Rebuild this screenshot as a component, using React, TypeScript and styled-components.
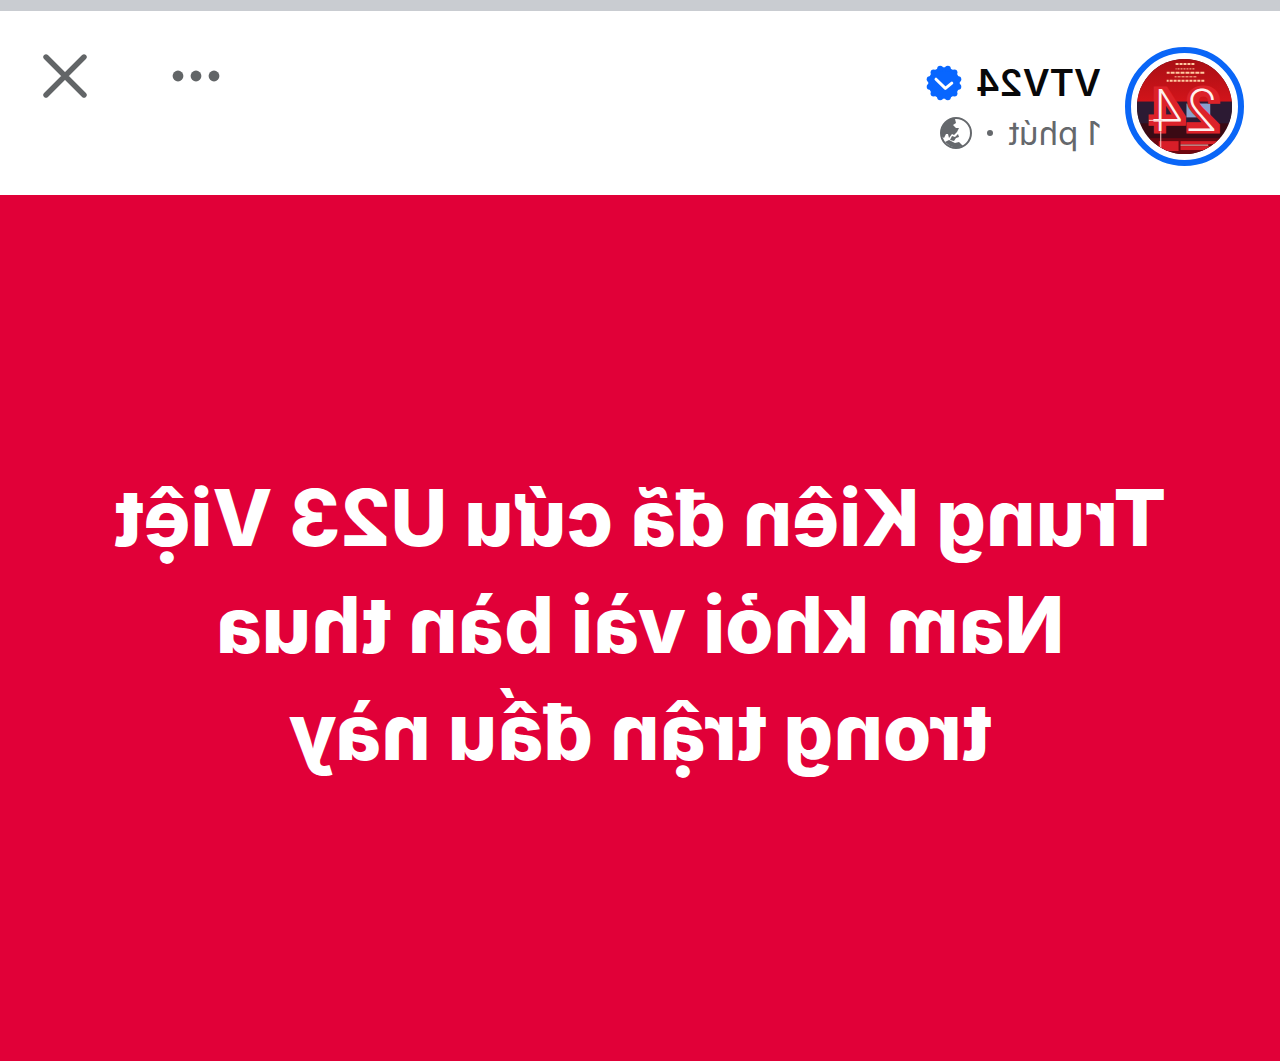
import React from "react";
import styled, { createGlobalStyle } from "styled-components";

const GlobalStyle = createGlobalStyle`
  *, *::before, *::after { box-sizing: border-box; }
  body {
    margin: 0;
    background: #ffffff;
    font-family: Inter, Roboto, "Liberation Sans", sans-serif;
  }
`;

/* The whole post is shown as a mirror image. */
const Page = styled.main`
  display: flex;
  flex-direction: column;
  min-height: 100vh;
  transform: scaleX(-1);
`;

const TopStrip = styled.div`
  height: 11px;
  background: #c9ccd1;
`;

const Header = styled.header`
  display: flex;
  align-items: flex-start;
  gap: 24px;
  padding: 36px 36px 29px;
  background: #ffffff;
`;

const AvatarLink = styled.a`
  display: flex;
  flex: none;
  width: 119px;
  height: 119px;
  padding: 6px;
  border: 6px solid #0a66f7;
  border-radius: 50%;

  svg { width: 100%; height: 100%; }
`;

const Author = styled.div`
  flex: 1;
  min-width: 0;
  padding-top: 11px;
`;

const Row = styled.div<{ $gap: number }>`
  display: flex;
  align-items: center;
  gap: ${(p) => p.$gap}px;
  line-height: 50px;
`;

const Name = styled.a`
  color: #080809;
  font-size: 37px;
  font-weight: 600;
  text-decoration: none;
`;

const Time = styled.time`
  color: #65686c;
  font-size: 33px;
`;

const Separator = styled.span`
  width: 6px;
  height: 6px;
  border-radius: 50%;
  background: #65686c;
`;

const Actions = styled.div`
  display: flex;
  gap: 72px;
`;

const IconButton = styled.button`
  display: grid;
  place-items: center;
  width: 59px;
  height: 58px;
  padding: 0;
  border: 0;
  background: none;
  color: #626567;
  cursor: pointer;
`;

const Story = styled.section`
  display: grid;
  flex: 1;
  place-items: center;
  padding: 24px 24px 32px;
  background: #e10038;
`;

const Headline = styled.h1`
  margin: 0;
  color: #ffffff;
  font-size: 78px;
  font-weight: 800;
  line-height: 107px;
  text-align: center;
`;

function Avatar() {
  return (
    <svg viewBox="0 0 96 96" aria-hidden="true">
      <defs>
        <clipPath id="disc"><circle cx="48" cy="48" r="48" /></clipPath>
        <linearGradient id="sky" x1="0" y1="0" x2="0" y2="1">
          <stop offset="0" stopColor="#a80f14" />
          <stop offset="1" stopColor="#d3141a" />
        </linearGradient>
      </defs>
      <g clipPath="url(#disc)">
        <rect width="96" height="96" fill="#3a0a14" />
        <rect width="96" height="44" fill="url(#sky)" />
        <rect y="43" width="96" height="22" fill="#2c1a33" />
        <rect x="22" y="45" width="24" height="14" fill="#8aa0cc" />
        <rect y="80" width="96" height="16" fill="#6d0710" />
        <g stroke="#ffc9a0" strokeWidth="2">
          <path d="M38 5h19" strokeDasharray="3 1" />
          <path d="M38 10h19" strokeWidth="1" strokeDasharray="2 1" />
          <path d="M28 14h38" strokeDasharray="4 1" />
          <path d="M36 18h22" strokeWidth="1" strokeDasharray="3 1" />
          <path d="M28 22h38" strokeDasharray="3 1" />
        </g>
        <g fill="#d81e28">
          <rect x="14" y="83" width="38" height="3" />
          <rect x="20" y="88" width="32" height="4" />
          <rect x="54" y="83" width="20" height="10" />
        </g>
        <g fontFamily="Inter, sans-serif" fontSize="58" textAnchor="middle">
          <text x="48" y="73" fontWeight="600" fill="#dc2229" stroke="#dc2229" strokeWidth="5">24</text>
          <text x="48" y="73" fontWeight="200" fill="#fff1ee">24</text>
        </g>
        <path d="M72 73v21M24 87h28M70 62h14" stroke="#ffd2cb" strokeWidth="1" />
      </g>
    </svg>
  );
}

function VerifiedBadge() {
  const points = Array.from({ length: 12 }, (_, i) => ((i + 0.5) * Math.PI) / 6);
  return (
    <svg width="36" height="36" viewBox="-18 -18 36 36" role="img" aria-label="Verified">
      <g fill="#0866ff">
        <circle r="15.8" />
        {points.map((a) => (
          <circle key={a} cx={Math.cos(a) * 14.8} cy={Math.sin(a) * 14.8} r="3" />
        ))}
      </g>
      <path d="M-7.8 0.2L-1.4 5.4L8 -3.8" fill="none" stroke="#fff" strokeWidth="3" strokeLinecap="round" strokeLinejoin="round" />
    </svg>
  );
}

function Globe() {
  return (
    <svg width="32" height="32" viewBox="0 0 32 32" role="img" aria-label="Public">
      <circle cx="16" cy="16" r="15" fill="#fff" stroke="#65686c" strokeWidth="2" />
      <g fill="#65686c">
        <path d="M17 2L22 2L28 7L31 14L31 19L28 21L26 17L24 17L23 21L20 17L18 18L15 15L13 11L16 11L19 8L16 6Z" />
        <path d="M20 19L22 23L18 24L16 21L13 20L14 17L17 20Z" />
        <path d="M23 23L27 25L22 29L16 31L9 29L13 25L17 26Z" />
      </g>
    </svg>
  );
}

export default function App() {
  return (
    <>
      <GlobalStyle />
      <Page lang="vi">
        <TopStrip />
        <Header>
          <AvatarLink href="#vtv24" aria-label="VTV24"><Avatar /></AvatarLink>
          <Author>
            <Row $gap={14}>
              <Name href="#vtv24">VTV24</Name>
              <VerifiedBadge />
            </Row>
            <Row $gap={15}>
              <Time>1 phút</Time>
              <Separator />
              <Globe />
            </Row>
          </Author>
          <Actions>
            <IconButton type="button" aria-label="More">
              <svg width="48" height="12" viewBox="0 0 48 12" fill="currentColor">
                <circle cx="6" cy="6" r="5.4" />
                <circle cx="24" cy="6" r="5.4" />
                <circle cx="42" cy="6" r="5.4" />
              </svg>
            </IconButton>
            <IconButton type="button" aria-label="Close">
              <svg width="44" height="44" viewBox="0 0 44 44" stroke="currentColor" strokeWidth="5.4" strokeLinecap="round">
                <path d="M3 3L41 41M41 3L3 41" />
              </svg>
            </IconButton>
          </Actions>
        </Header>
        <Story>
          <Headline>
            Trung Kiên đã cứu U23 Việt<br />
            Nam khỏi vài bàn thua<br />
            trong trận đấu này
          </Headline>
        </Story>
      </Page>
    </>
  );
}
